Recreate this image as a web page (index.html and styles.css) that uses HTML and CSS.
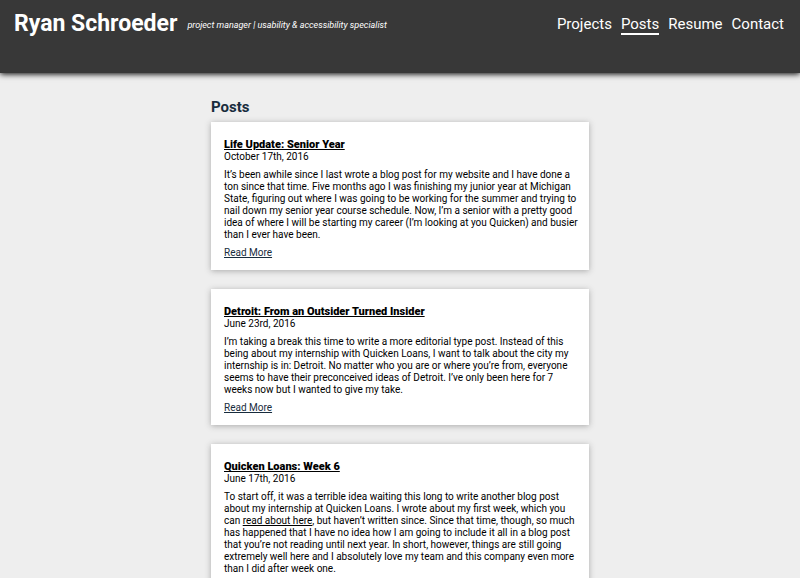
FILE: index.html
```html
<!DOCTYPE html>
<html lang="en">
<head>
<meta charset="utf-8">
<meta name="viewport" content="width=device-width, initial-scale=1">
<title>Posts | Ryan Schroeder</title>
<link rel="stylesheet" href="styles.css">
</head>
<body>
<header class="site-header">
  <div class="brand">
    <a class="brand-name" href="#">Ryan Schroeder</a>
    <p class="tagline">project manager | usability &amp; accessibility specialist</p>
  </div>
  <nav class="site-nav">
    <a href="#">Projects</a>
    <a class="current" href="#" aria-current="page">Posts</a>
    <a href="#">Resume</a>
    <a href="#">Contact</a>
  </nav>
</header>
<main class="posts">
  <h1>Posts</h1>
  <article class="post">
    <h2><a href="#">Life Update: Senior Year</a></h2>
    <time datetime="2016-10-17">October 17th, 2016</time>
    <p>It’s been awhile since I last wrote a blog post for my website and I have done a ton since that time. Five months ago I was finishing my junior year at Michigan State, figuring out where I was going to be working for the summer and trying to nail down my senior year course schedule. Now, I’m a senior with a pretty good idea of where I will be starting my career (I’m looking at you Quicken) and busier than I ever have been.</p>
    <a class="more" href="#">Read More</a>
  </article>
  <article class="post">
    <h2><a href="#">Detroit: From an Outsider Turned Insider</a></h2>
    <time datetime="2016-06-23">June 23rd, 2016</time>
    <p>I’m taking a break this time to write a more editorial type post. Instead of this being about my internship with Quicken Loans, I want to talk about the city my internship is in: Detroit. No matter who you are or where you’re from, everyone seems to have their preconceived ideas of Detroit. I’ve only been here for 7 weeks now but I wanted to give my take.</p>
    <a class="more" href="#">Read More</a>
  </article>
  <article class="post">
    <h2><a href="#">Quicken Loans: Week 6</a></h2>
    <time datetime="2016-06-17">June 17th, 2016</time>
    <p>To start off, it was a terrible idea waiting this long to write another blog post about my internship at Quicken Loans. I wrote about my first week, which you can <a href="#">read about here</a>, but haven’t written since. Since that time, though, so much has happened that I have no idea how I am going to include it all in a blog post that you’re not reading until next year. In short, however, things are still going extremely well here and I absolutely love my team and this company even more than I did after week one.</p>
  </article>
</main>
</body>
</html>
```

FILE: styles.css
```css
* {
  box-sizing: border-box;
}

html {
  overflow-x: hidden;
  scrollbar-width: none;
}

body {
  margin: 0;
  background: #eee;
  color: #000;
  font: 10px/12px Roboto, sans-serif;
}

.site-header {
  display: flex;
  justify-content: space-between;
  align-items: flex-start;
  padding: 11px 16px 36px 14px;
  background: #383838;
  box-shadow: 0 1px 6px #000;
  color: #fff;
}

.site-header a {
  color: inherit;
  text-decoration: none;
}

.brand {
  display: flex;
  align-items: center;
  gap: 10px;
}

.brand-name {
  font-size: 23px;
  line-height: 26px;
  font-weight: 700;
}

.tagline {
  margin: 2px 0 0;
  font-size: 9px;
  font-style: italic;
}

.site-nav {
  display: flex;
  gap: 9px;
  padding-top: 4px;
  font-size: 15px;
  line-height: 18px;
}

.site-nav a {
  border-bottom: 2px solid transparent;
}

.site-nav .current {
  border-color: #fff;
}

.posts {
  width: 378px;
  max-width: 100%;
  margin: 0 auto;
  padding-top: 25px;
}

h1 {
  margin: 0 0 6px;
  color: #182c3d;
  font-size: 15px;
  line-height: 18px;
  font-weight: 700;
}

.post {
  margin-bottom: 19px;
  padding: 16px 11px 11px 13px;
  background: #fff;
  box-shadow: 0 1px 6px #aaa;
}

.post a {
  color: inherit;
}

.post h2 {
  margin: 0;
  font-size: 11px;
  line-height: 13px;
  font-weight: 900;
}

.post time {
  display: block;
}

.post p {
  margin: 6px 0;
}

.post .more {
  display: block;
  width: fit-content;
  color: #182c3d;
}
```
